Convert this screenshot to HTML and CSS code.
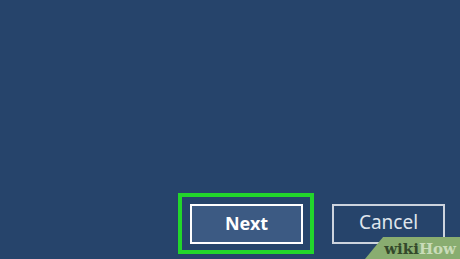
FILE: index.html
```html
<!DOCTYPE html>
<html lang="en">
<head>
  <meta charset="UTF-8">
  <meta name="viewport" content="width=device-width, initial-scale=1.0">
  <title>Next</title>
  <link rel="stylesheet" href="styles.css">
</head>
<body>
  <div class="screen">
    <div class="actions">
      <div class="focus-ring">
        <button class="btn btn-next">Next</button>
      </div>
      <button class="btn btn-cancel">Cancel</button>
    </div>
    <div class="watermark"><span class="wiki">wiki</span><span class="how">How</span></div>
  </div>
</body>
</html>
```

FILE: styles.css
```css
html, body {
  margin: 0;
  height: 100%;
}
body {
  background-color: #26446b;
  font-family: "Noto Sans", "Open Sans", sans-serif;
}
.screen {
  position: relative;
  display: flex;
  flex-direction: column;
  justify-content: flex-end;
  height: 259px;
  overflow: hidden;
}
.actions {
  display: flex;
  justify-content: flex-end;
  align-items: center;
  gap: 18px;
  padding: 0 15px 5px 0;
}
.focus-ring {
  display: flex;
  border: 4px solid #22d62b;
  padding: 7px 7px 6px 8px;
}
.btn {
  box-sizing: border-box;
  width: 113px;
  height: 40px;
  margin: 0;
  padding: 0 0 2px;
  font-family: "Noto Sans", "Open Sans", sans-serif;
  font-size: 19px;
  line-height: 1;
}
.btn-next {
  background-color: #3c5a83;
  border: 2px solid #ffffff;
  color: #ffffff;
  font-size: 18px;
  font-weight: 700;
}
.btn-cancel {
  background-color: transparent;
  border: 2px solid #cdd4de;
  color: #dfe5ec;
  font-weight: 400;
}
.watermark {
  position: absolute;
  right: 0;
  bottom: 0;
  width: 95px;
  height: 22px;
  display: flex;
  align-items: flex-end;
  justify-content: flex-end;
  padding-right: 4px;
  box-sizing: border-box;
  background-color: #89ad70;
  clip-path: polygon(0 100%, 19% 0, 100% 0, 100% 100%);
  font-family: "DejaVu Serif", "Liberation Serif", serif;
  font-weight: 700;
  font-size: 15px;
  line-height: 20px;
}
.wiki {
  color: #34492b;
}
.how {
  color: #c9dcb9;
}
```
